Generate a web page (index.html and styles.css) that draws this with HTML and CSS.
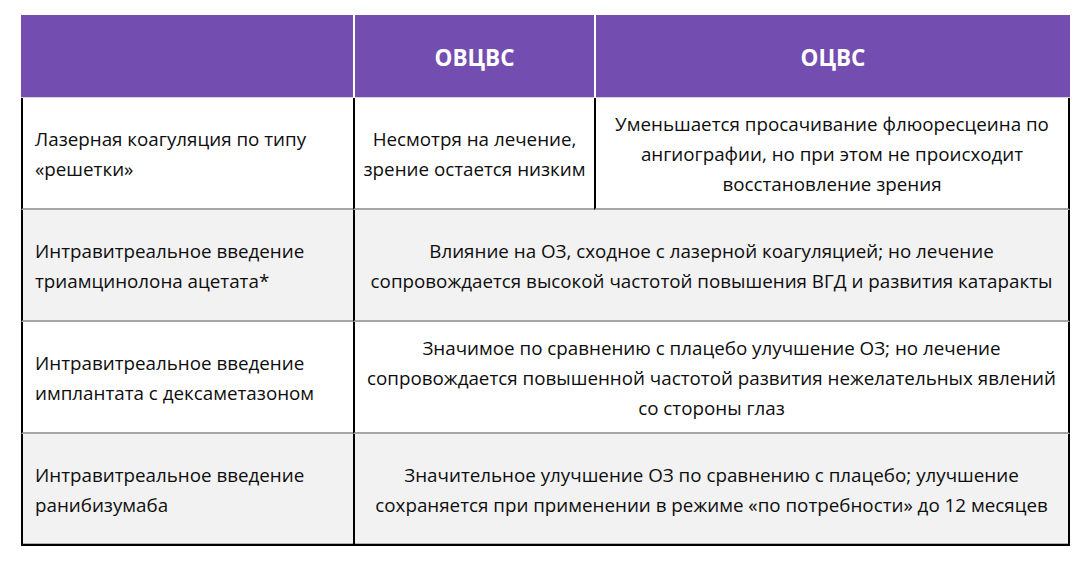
FILE: index.html
```html
<!DOCTYPE html>
<html lang="ru">
<head>
<meta charset="utf-8">
<title>ОВЦВС / ОЦВС</title>
<link rel="stylesheet" href="styles.css">
</head>
<body>
<div class="page">
<table class="grid">
  <colgroup>
    <col class="c1">
    <col class="c2">
    <col class="c3">
  </colgroup>
  <thead>
    <tr>
      <th></th>
      <th>ОВЦВС</th>
      <th>ОЦВС</th>
    </tr>
  </thead>
  <tbody>
    <tr>
      <td class="name">Лазерная коагуляция по типу<br>«решетки»</td>
      <td>Несмотря на лечение,<br>зрение остается низким</td>
      <td>Уменьшается просачивание флюоресцеина по<br>ангиографии, но при этом не происходит<br>восстановление зрения</td>
    </tr>
    <tr class="alt">
      <td class="name">Интравитреальное введение<br>триамцинолона ацетата*</td>
      <td colspan="2">Влияние на ОЗ, сходное с лазерной коагуляцией; но лечение<br>сопровождается высокой частотой повышения ВГД и развития катаракты</td>
    </tr>
    <tr>
      <td class="name">Интравитреальное введение<br>имплантата с дексаметазоном</td>
      <td colspan="2">Значимое по сравнению с плацебо улучшение ОЗ; но лечение<br>сопровождается повышенной частотой развития нежелательных явлений<br>со стороны глаз</td>
    </tr>
    <tr class="alt">
      <td class="name">Интравитреальное введение<br>ранибизумаба</td>
      <td colspan="2">Значительное улучшение ОЗ по сравнению с плацебо; улучшение<br>сохраняется при применении в режиме «по потребности» до 12 месяцев</td>
    </tr>
  </tbody>
</table>
</div>
</body>
</html>
```

FILE: styles.css
```css
html, body {
  margin: 0;
  padding: 0;
  background: #ffffff;
}

.page {
  padding: 15px 0 0 21px;
  font-family: "Open Sans", "Noto Sans", "DejaVu Sans", sans-serif;
  color: #0d0d0d;
}

.grid {
  width: 1049px;
  border-collapse: separate;
  border-spacing: 0;
  table-layout: fixed;
}

.c1 { width: 332px; }
.c2 { width: 241px; }
.c3 { width: 476px; }

.grid th {
  box-sizing: border-box;
  height: 83px;
  background: #744db1;
  color: #ffffff;
  font-size: 22.5px;
  font-weight: 700;
  text-align: center;
  vertical-align: middle;
  padding: 2px 0 0;
  border-bottom: 1px solid #d4d0dc;
}

.grid th + th {
  border-left: 2px solid #ffffff;
}

.grid td {
  box-sizing: border-box;
  height: 112px;
  padding: 2px 2px 0;
  font-size: 18.8px;
  line-height: 30px;
  text-align: center;
  vertical-align: middle;
  border-left: 2px solid #000000;
  border-bottom: 2px solid #a6a6a6;
  white-space: nowrap;
}

.grid td:last-child {
  border-right: 2px solid #000000;
}

.grid td.name {
  text-align: left;
  padding-left: 12px;
}

.grid tr.alt td {
  background: #f2f2f2;
}

.grid tbody tr:last-child td {
  border-bottom: 2px solid #000000;
  box-shadow: inset 0 -1px 0 #b0b0b0;
}
```
